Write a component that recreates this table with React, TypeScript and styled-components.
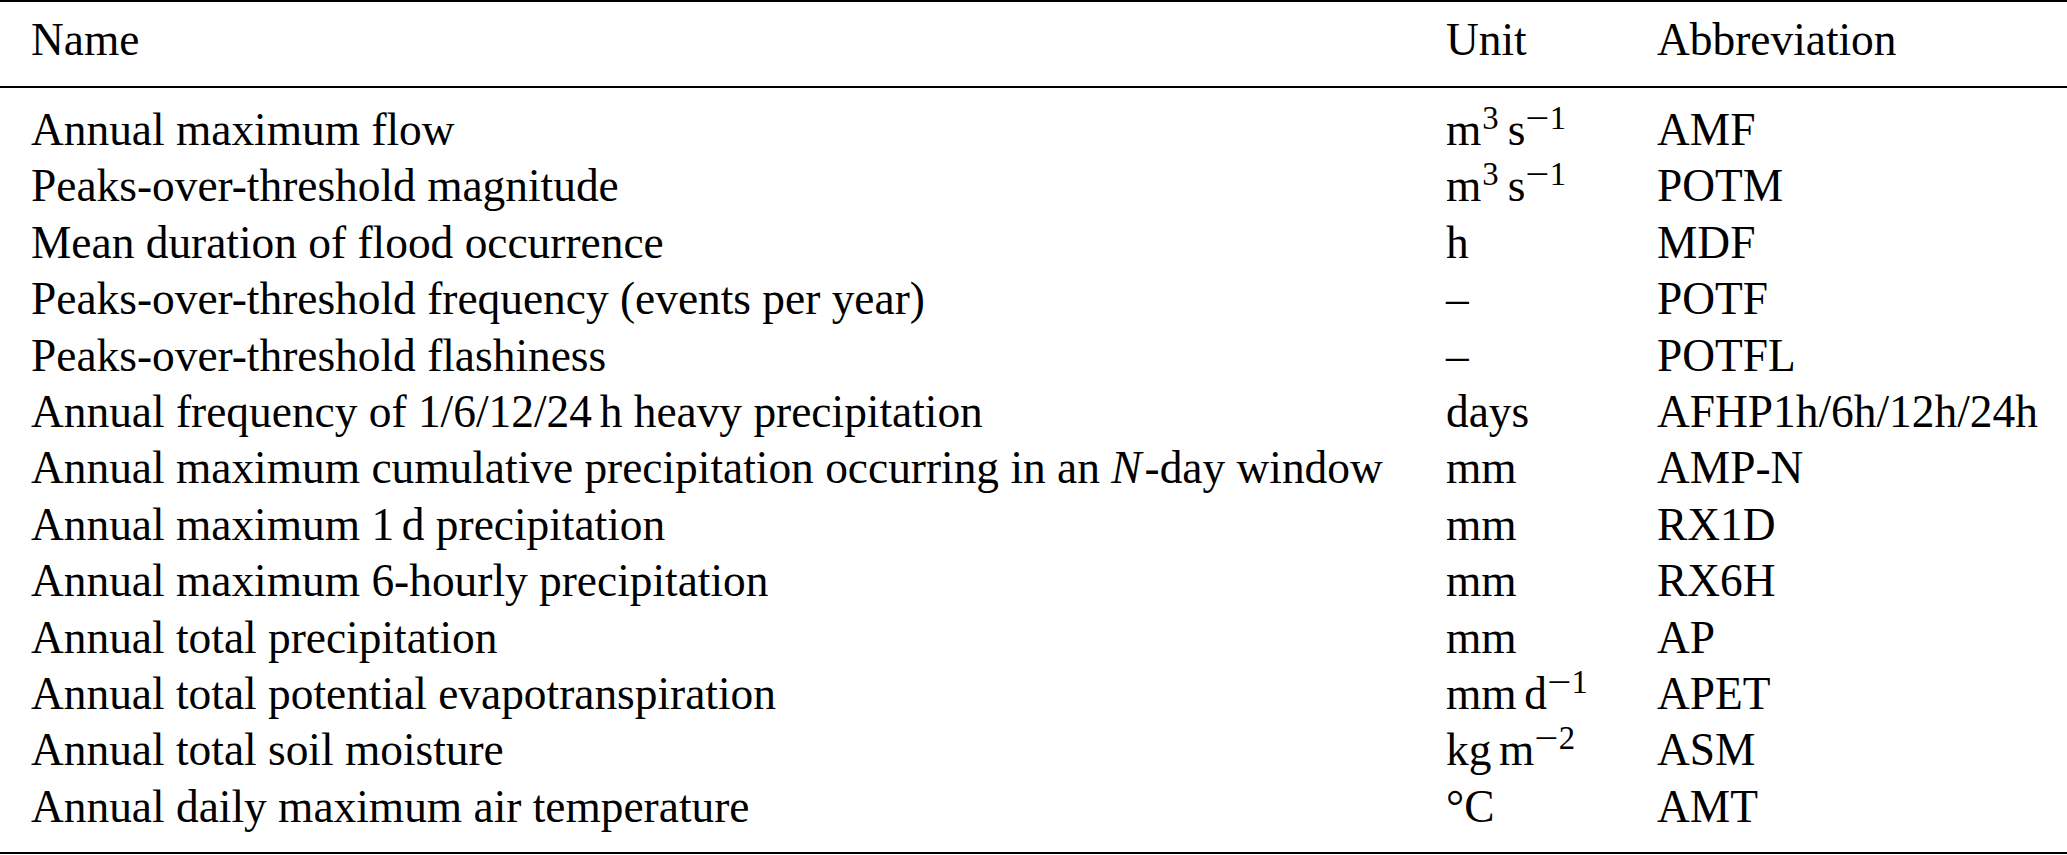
import React from 'react';
import styled, { createGlobalStyle } from 'styled-components';

const GlobalStyle = createGlobalStyle`
  html, body {
    margin: 0;
    padding: 0;
    background: #fff;
  }
  body {
    font-family: 'Liberation Serif', 'Times New Roman', serif;
    color: #000;
  }
`;

type Row = {
  name: React.ReactNode;
  unit: React.ReactNode;
  abbr: string;
};

const Table = styled.div`
  width: 100%;
  border-top: 2px solid #000;
  border-bottom: 2px solid #000;
  font-size: 45.4px;
`;

const HeadRow = styled.div`
  display: grid;
  grid-template-columns: 1415px 211px 1fr;
  padding: 10px 0 18px;
  line-height: 56px;
  border-bottom: 2px solid #000;
`;

const Body = styled.div`
  padding: 14px 0 17px;
`;

const BodyRow = styled.div`
  display: grid;
  grid-template-columns: 1415px 211px 1fr;
  line-height: 56.4px;
`;

const Cell = styled.div`
  padding: 0 31px;
  white-space: nowrap;
`;

const Sup = styled.sup<{ $gap?: number }>`
  font-size: 0.72em;
  line-height: 0;
  vertical-align: 16px;
  margin-left: 1px;
  margin-right: ${(p) => p.$gap ?? 0}px;
`;

const Minus = styled.span`
  display: inline-block;
  transform: scaleX(1.3);
  margin: 0 3px 0 2px;
`;

const Thin = styled.span`
  display: inline-block;
  width: 0.17em;
`;

const MathVar = styled.i`
  font-style: italic;
  margin-right: 3px;
`;

const Power: React.FC<{ n: number }> = ({ n }) => (
  <Sup>
    <Minus>−</Minus>
    {n}
  </Sup>
);

const rows: Row[] = [
  {
    name: 'Annual maximum flow',
    unit: (
      <>
        m<Sup $gap={9}>3</Sup>s<Power n={1} />
      </>
    ),
    abbr: 'AMF',
  },
  {
    name: 'Peaks-over-threshold magnitude',
    unit: (
      <>
        m<Sup $gap={9}>3</Sup>s<Power n={1} />
      </>
    ),
    abbr: 'POTM',
  },
  { name: 'Mean duration of flood occurrence', unit: 'h', abbr: 'MDF' },
  { name: 'Peaks-over-threshold frequency (events per year)', unit: '–', abbr: 'POTF' },
  { name: 'Peaks-over-threshold flashiness', unit: '–', abbr: 'POTFL' },
  {
    name: (
      <>
        Annual frequency of 1/6/12/24<Thin />h heavy precipitation
      </>
    ),
    unit: 'days',
    abbr: 'AFHP1h/6h/12h/24h',
  },
  {
    name: (
      <>
        Annual maximum cumulative precipitation occurring in an <MathVar>N</MathVar>-day window
      </>
    ),
    unit: 'mm',
    abbr: 'AMP-N',
  },
  {
    name: (
      <>
        Annual maximum 1<Thin />d precipitation
      </>
    ),
    unit: 'mm',
    abbr: 'RX1D',
  },
  { name: 'Annual maximum 6-hourly precipitation', unit: 'mm', abbr: 'RX6H' },
  { name: 'Annual total precipitation', unit: 'mm', abbr: 'AP' },
  {
    name: 'Annual total potential evapotranspiration',
    unit: (
      <>
        mm<Thin />d<Power n={1} />
      </>
    ),
    abbr: 'APET',
  },
  {
    name: 'Annual total soil moisture',
    unit: (
      <>
        kg<Thin />m<Power n={2} />
      </>
    ),
    abbr: 'ASM',
  },
  { name: 'Annual daily maximum air temperature', unit: '°C', abbr: 'AMT' },
];

const App: React.FC = () => {
  return (
    <>
      <GlobalStyle />
      <Table>
        <HeadRow>
          <Cell>Name</Cell>
          <Cell>Unit</Cell>
          <Cell>Abbreviation</Cell>
        </HeadRow>
        <Body>
          {rows.map((r) => (
            <BodyRow key={r.abbr}>
              <Cell>{r.name}</Cell>
              <Cell>{r.unit}</Cell>
              <Cell>{r.abbr}</Cell>
            </BodyRow>
          ))}
        </Body>
      </Table>
    </>
  );
};

export default App;
